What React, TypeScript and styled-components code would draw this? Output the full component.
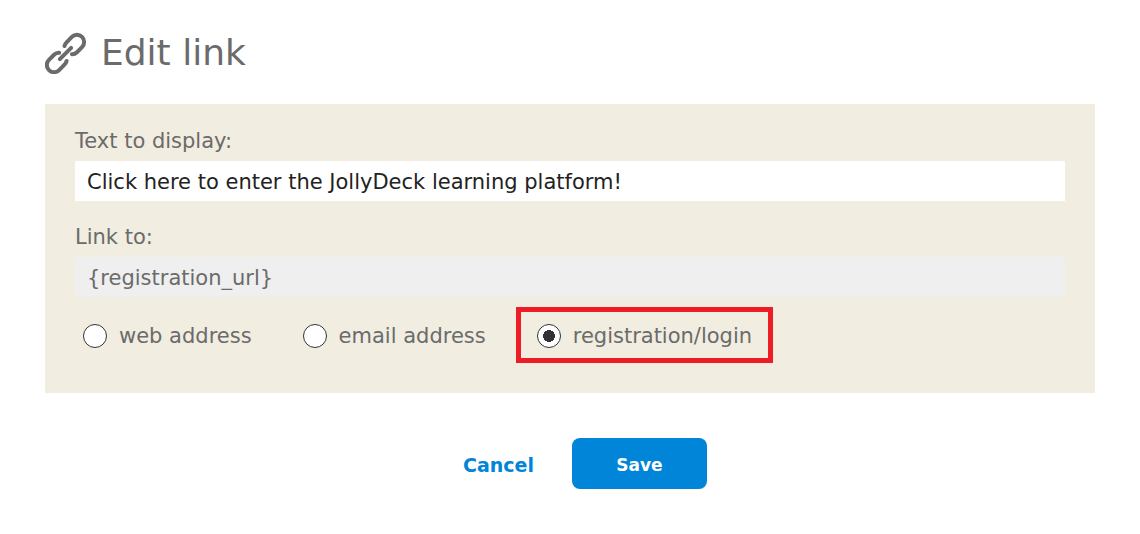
import React, { useState } from "react";
import styled, { createGlobalStyle } from "styled-components";

const GlobalStyle = createGlobalStyle`
  *, *::before, *::after { box-sizing: border-box; }
  body {
    margin: 0;
    background: #fff;
    color: #6b6b6b;
    font-family: Verdana, "DejaVu Sans", sans-serif;
    font-size: 21px;
    line-height: 28px;
  }
  button, input { font: inherit; }
`;

const Dialog = styled.form`
  padding: 30px 45px 44px;
`;

const Header = styled.header`
  display: flex;
  align-items: center;
  gap: 14px;
  margin-bottom: 28px;
`;

const LinkIcon = styled.svg`
  width: 42px;
  height: 42px;
  flex: none;
`;

const Title = styled.h1`
  margin: 0;
  font-size: 36px;
  line-height: 46px;
  font-weight: 400;
`;

const Panel = styled.section`
  padding: 23px 30px 30px;
  background: #f1ede0;
`;

const Field = styled.div`
  display: flex;
  flex-direction: column;
  gap: 6px;
  margin-bottom: 22px;

  &:last-of-type {
    margin-bottom: 10px;
  }
`;

const TextInput = styled.input`
  width: 100%;
  height: 40px;
  padding: 2px 12px 0;
  border: 0;
  border-radius: 0;
  background: #fff;
  color: #222;

  &:disabled {
    background: #efefef;
    color: #6b6b6b;
  }
`;

const Options = styled.fieldset`
  display: flex;
  flex-wrap: wrap;
  gap: 9px;
  margin: 0 -13px;
  padding: 0;
  border: 0;
`;

const Option = styled.label<{ $highlighted?: boolean }>`
  display: flex;
  align-items: center;
  gap: 12px;
  padding: 10px 16px 8px;
  border: 5px solid ${(p) => (p.$highlighted ? "#ee1c25" : "transparent")};
  white-space: nowrap;
`;

const Radio = styled.input`
  appearance: none;
  width: 24px;
  height: 24px;
  margin: 0;
  border: 1px solid #333;
  border-radius: 50%;
  background: #fff;

  &:checked {
    background: radial-gradient(circle, #333 0 6px, #fff 6px);
  }
`;

const Actions = styled.footer`
  display: flex;
  justify-content: center;
  align-items: center;
  gap: 8px;
  margin-top: 45px;
`;

const CancelButton = styled.button`
  padding: 12px 30px 10px;
  border: 0;
  background: none;
  color: #0085d9;
  font-size: 19px;
  font-weight: 700;
  cursor: pointer;
`;

const SaveButton = styled.button`
  min-width: 135px;
  height: 51px;
  padding: 2px 30px 0;
  border: 0;
  border-radius: 8px;
  background: #0085d9;
  color: #fff;
  font-size: 17px;
  font-weight: 700;
  cursor: pointer;
`;

const targets = [
  { id: "web", label: "web address" },
  { id: "email", label: "email address" },
  { id: "registration", label: "registration/login" },
];

export default function App() {
  const [text, setText] = useState("Click here to enter the JollyDeck learning platform!");
  const [target, setTarget] = useState("registration");
  const [address, setAddress] = useState("");
  const fixed = target === "registration";

  return (
    <>
      <GlobalStyle />
      <Dialog onSubmit={(e) => e.preventDefault()}>
        <Header>
          <LinkIcon viewBox="0 0 42 42" fill="none" stroke="#6b6b6b" aria-hidden="true">
            <g transform="translate(20.5 21.5) rotate(-45)" strokeWidth="4" strokeLinecap="round">
              <path d="M4.5 -6 Q6.5 -7.2 9 -7.2 H16.2 A7.2 7.2 0 0 1 16.2 7.2 H9 Q6 7.2 4 5" />
              <path d="M-4.5 6 Q-6.5 7.2 -9 7.2 H-16.2 A7.2 7.2 0 0 1 -16.2 -7.2 H-9 Q-6 -7.2 -4 -5" />
              <path d="M-8 0 H8" />
            </g>
          </LinkIcon>
          <Title>Edit link</Title>
        </Header>
        <Panel>
          <Field>
            <label htmlFor="display-text">Text to display:</label>
            <TextInput id="display-text" value={text} onChange={(e) => setText(e.target.value)} />
          </Field>
          <Field>
            <label htmlFor="link-target">Link to:</label>
            <TextInput
              id="link-target"
              value={fixed ? "{registration_url}" : address}
              disabled={fixed}
              onChange={(e) => setAddress(e.target.value)}
            />
          </Field>
          <Options aria-label="Link type">
            {targets.map((t) => (
              <Option key={t.id} $highlighted={t.id === "registration"}>
                <Radio
                  type="radio"
                  name="link-type"
                  value={t.id}
                  checked={target === t.id}
                  onChange={() => setTarget(t.id)}
                />
                {t.label}
              </Option>
            ))}
          </Options>
        </Panel>
        <Actions>
          <CancelButton type="button">Cancel</CancelButton>
          <SaveButton type="submit">Save</SaveButton>
        </Actions>
      </Dialog>
    </>
  );
}
